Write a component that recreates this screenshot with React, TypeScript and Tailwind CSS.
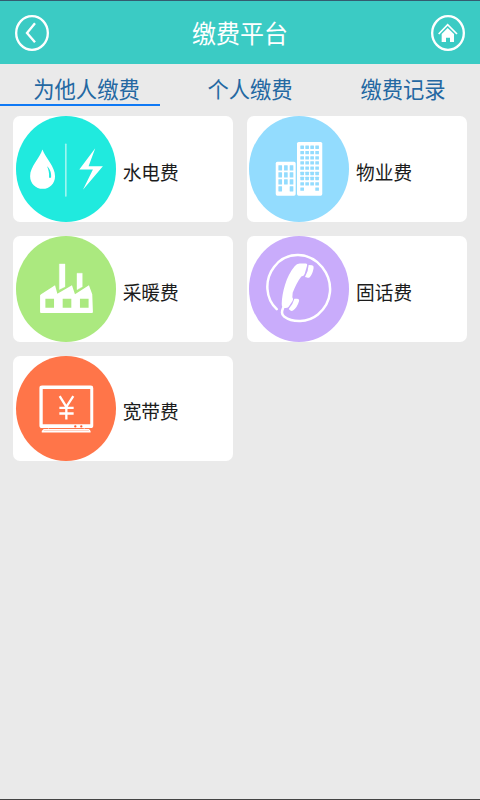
import type { ReactNode } from 'react';

const WaterPowerIcon = () => (
  <svg viewBox="33 18 300 318" className="block size-full" fill="#fff">
    <path fillRule="evenodd" d="M112 119C104 146 75 170 75 199C75 221 92 237 113 237C134 237 150 221 150 199C150 170 122 146 112 119ZM126 169C135 177 140 190 138 204H132C133 190 131 180 126 169Z" />
    <rect x="180" y="101" width="5" height="160" rx="2" opacity=".55" />
    <path d="M271 115L223 179H264L234 240L294 169H251Z" />
  </svg>
);

const BuildingIcon = () => (
  <svg viewBox="28 18 300 318" className="block size-full">
    <rect x="172" y="96" width="76" height="162" rx="5" fill="#fff" />
    <rect x="108" y="156" width="60" height="102" rx="5" fill="#fff" />
    <g fill="#93dcfe">
      {[107, 123, 139, 154, 170, 186, 201, 217, 233].map((y, row) =>
        [182, 197, 212, 227].map((x, col) =>
          row === 8 && (col === 1 || col === 2) ? null : <rect key={`${x}-${y}`} x={x} y={y} width="11" height="10" rx="1" />,
        ),
      )}
      {[166, 187, 208, 229].map((y, row) =>
        [116, 133, 150].map((x, col) =>
          row === 3 && col === 1 ? null : <rect key={`${x}-${y}`} x={x} y={y} width="11" height="16" rx="1" />,
        ),
      )}
    </g>
  </svg>
);

const FactoryIcon = () => (
  <svg viewBox="33 18 300 318" className="block size-full" fill="#fff">
    <path d="M163 102H180V171L163 179ZM216 130H232V171L216 180Z" stroke="#fff" strokeWidth="1" strokeLinejoin="round" />
    <path
      fillRule="evenodd"
      d="M108 193L150 166L157 192L201 166L210 193L252 166L262 193L264 247Q264 250 261 250H108Q105 250 105 247V196ZM121 207V234H147V207ZM173 207V234H199V207ZM225 207V234H251V207Z"
    />
  </svg>
);

const PhoneIcon = () => (
  <svg viewBox="28 18 300 318" className="block size-full" fill="#fff">
    <path
      d="M111 238C77 207 73 150 103 111C141 61 211 66 248 112C284 158 278 219 235 254C203 280 159 279 133 260C125 254 126 244 130 235"
      fill="none"
      stroke="#fff"
      strokeWidth="7.5"
      strokeLinecap="round"
    />
    <path d="M180 101H198Q204 101 202 108L195 132Q193 139 185 140Q171 158 159 189L158 202Q162 207 159 213L147 231Q144 235 137 235H132Q126 234 126 222C127 189 139 139 165 109Q171 102 180 101Z" />
    <path d="M207 105L217 106Q223 107 222 114Q219 132 211 141Q207 145 202 143L196 141Q206 125 207 105ZM164 207H172Q180 208 178 214Q173 232 160 242Q156 245 152 242L147 238Q160 224 164 207Z" />
  </svg>
);

const BroadbandIcon = () => (
  <svg viewBox="33 15 300 318" className="block size-full" fill="#fff">
    <path
      fillRule="evenodd"
      d="M111 104H258Q265 104 265 111V224Q265 232 258 232H239V235H252L257 241V245H110V241L116 235H129V232H111Q103 232 103 224V111Q103 104 111 104ZM113 114V220H256V114ZM128 235H240L235 232H132Z"
    />
    <path d="M116 239H252" stroke="#ff7549" strokeWidth="1" />
    <circle cx="211" cy="227" r="3.5" fill="#ff5b2d" />
    <circle cx="229" cy="227" r="3.5" fill="#ff5b2d" />
    <path d="M164 136L184 168L205 136M184 168V206M163 171H206M163 188H206" fill="none" stroke="#fff" strokeWidth="7" />
  </svg>
);

type Service = { label: string; color: string; icon: ReactNode };

const services: Service[] = [
  { label: '水电费', color: 'bg-[#20eade]', icon: <WaterPowerIcon /> },
  { label: '物业费', color: 'bg-[#93dcfe]', icon: <BuildingIcon /> },
  { label: '采暖费', color: 'bg-[#abe97f]', icon: <FactoryIcon /> },
  { label: '固话费', color: 'bg-[#c9acfb]', icon: <PhoneIcon /> },
  { label: '宽带费', color: 'bg-[#ff7549]', icon: <BroadbandIcon /> },
];

const ServiceCard = ({ label, color, icon }: Service) => (
  <button className="flex h-[105.7px] items-center rounded-[7px] bg-white pl-[2.8px] text-left">
    <span className={`h-full w-[100px] shrink-0 overflow-hidden rounded-[50%] ${color}`}>{icon}</span>
    <span className="ml-[6.7px] mt-[5.8px] origin-center scale-y-[1.04] text-[18.7px] leading-7 text-[#1c1c1c]">
      {label}
    </span>
  </button>
);

export default function App() {
  return (
    <div className="flex h-[800px] w-[480px] flex-col overflow-hidden border-b border-[#444] bg-[#eaeaea] font-['Noto_Sans_CJK_SC',sans-serif]">
      <header className="flex h-16 shrink-0 items-center justify-between border-t border-[#345c70] bg-[#3bcbc4] px-[15px]">
        <button aria-label="返回" className="block">
          <svg width="34" height="36" viewBox="0 0 102 108" fill="none" stroke="#fff" strokeWidth="7">
            <ellipse cx="51" cy="54" rx="47.5" ry="50.5" />
            <path d="M60 25L36 54L60 82" strokeWidth="7" />
          </svg>
        </button>
        <h1 className="-mt-0.5 scale-y-[1.05] text-[24px] leading-8 text-white">缴费平台</h1>
        <button aria-label="首页" className="block">
          <svg width="34" height="36" viewBox="0 0 102 108" fill="none" stroke="#fff" strokeWidth="7">
            <ellipse cx="51" cy="54" rx="47.5" ry="50.5" />
            <path d="M23 57L50 29L78 57" strokeWidth="5" />
            <path d="M50 39L69 57V81H57V68H45V81H32V57Z" fill="#fff" stroke="none" />
          </svg>
        </button>
      </header>

      <nav className="flex h-[43px] shrink-0 text-[21.3px] leading-8 text-[#2468a2]">
        <button className="flex h-[42px] w-40 items-center justify-center border-b-2 border-[#0f79f5] pl-[13px] pt-[10px]">
          <span className="scale-y-[1.05]">为他人缴费</span>
        </button>
        <button className="flex h-[42px] w-[180px] items-center justify-center pt-[8px]">
          <span className="scale-y-[1.05]">个人缴费</span>
        </button>
        <button className="flex h-[42px] w-[140px] items-center justify-center pt-[8px] pr-[14px]">
          <span className="scale-y-[1.05]">缴费记录</span>
        </button>
      </nav>

      <main className="grid grid-cols-[220px_220px] gap-x-[13.4px] gap-y-[14px] pl-[13.2px] pt-[9.2px]">
        {services.map((service) => (
          <ServiceCard key={service.label} {...service} />
        ))}
      </main>
    </div>
  );
}
